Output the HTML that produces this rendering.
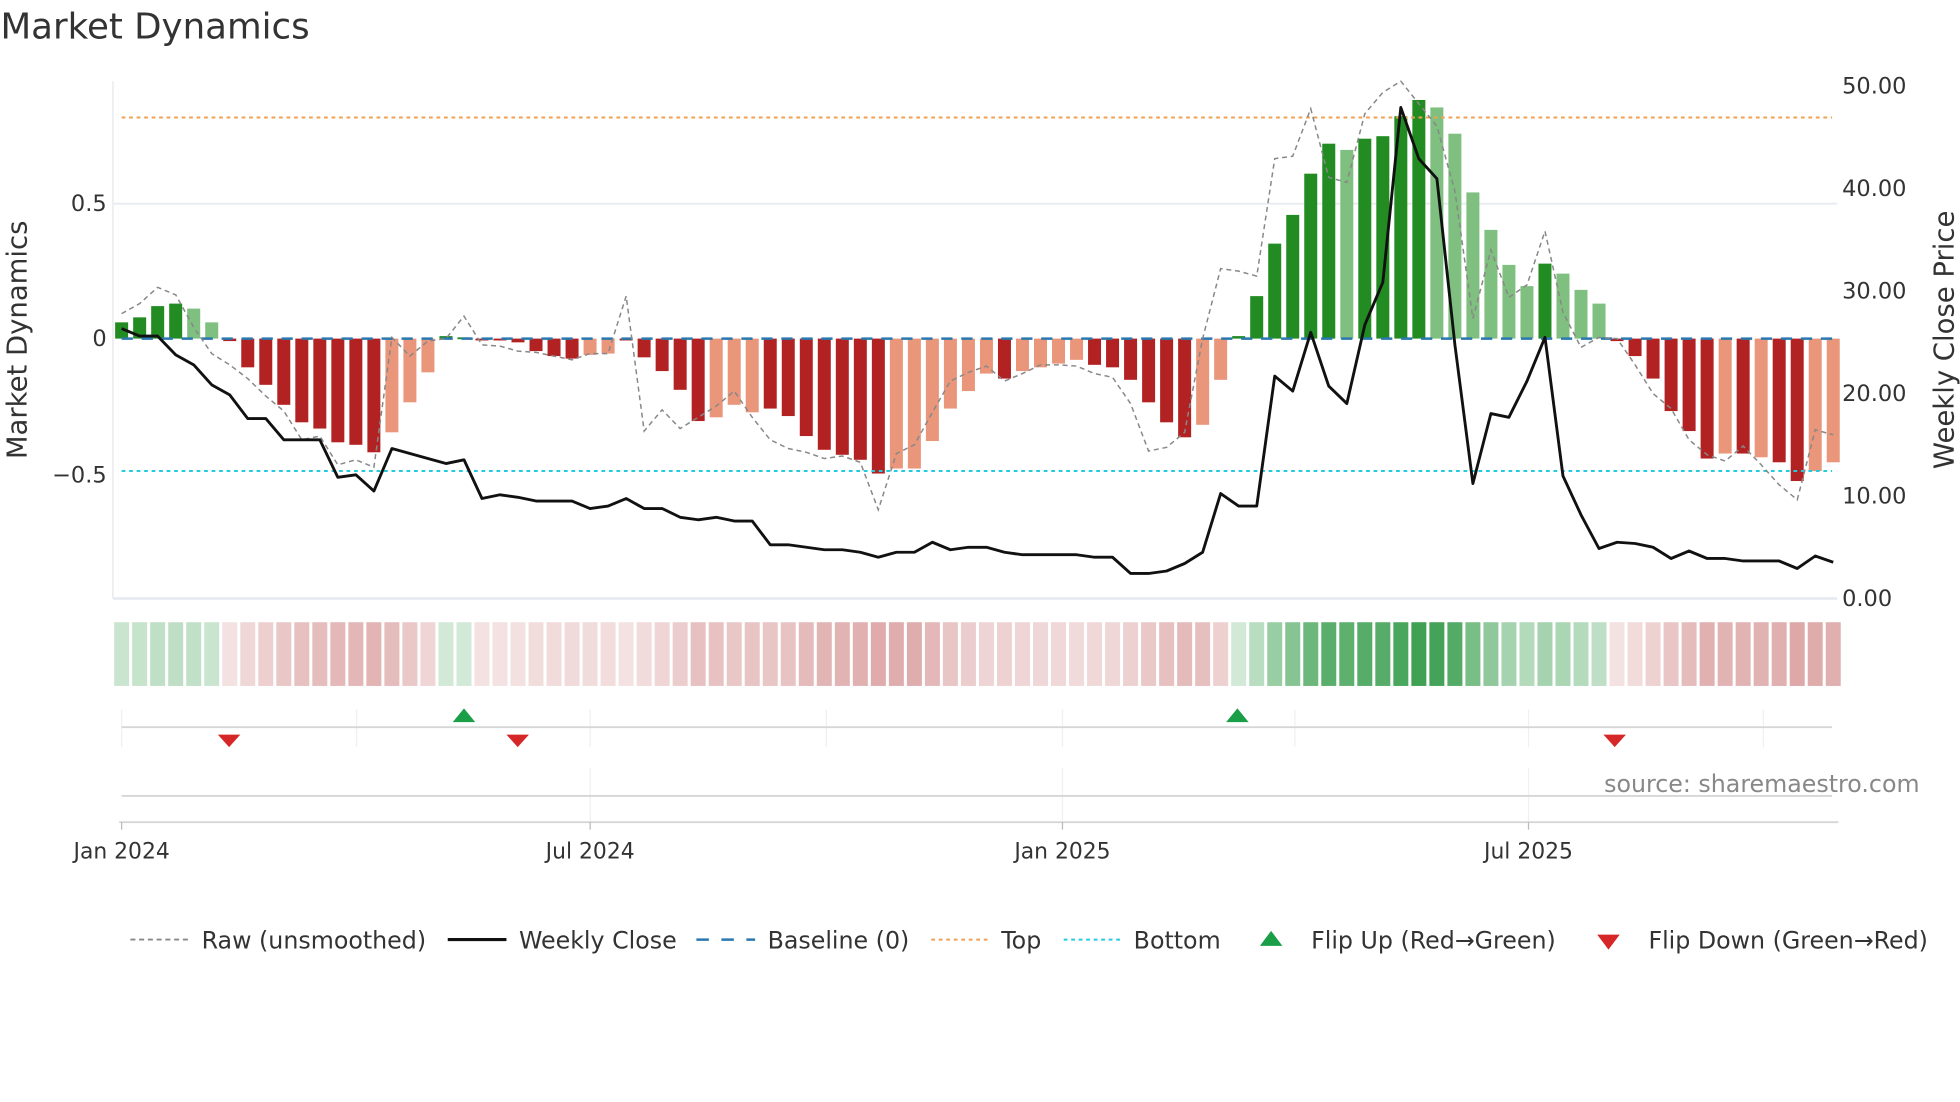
<!DOCTYPE html>
<html><head><meta charset="utf-8"><style>
html,body{margin:0;padding:0;background:#fff;width:1960px;height:1102px;overflow:hidden}
svg{display:block;font-family:"DejaVu Sans","Liberation Sans",sans-serif}
</style></head><body>
<svg id="s" width="1960" height="1102" viewBox="0 0 1568 882" xmlns="http://www.w3.org/2000/svg">
<rect width="1568" height="882" fill="#fff"/>
<text x="0" y="31" font-size="28.5" fill="#333">Market Dynamics</text>
<line x1="90" y1="163" x2="1470" y2="163" stroke="#e8ebf0" stroke-width="1.5"/>
<line x1="90" y1="65" x2="90" y2="479" stroke="#eceef2" stroke-width="1.5"/>
<line x1="90" y1="479" x2="1470" y2="479" stroke="#e6e9ef" stroke-width="2"/>
<g id="bars"></g>
<line x1="97" y1="94" x2="1466" y2="94" stroke="#f0a050" stroke-width="1.6" stroke-dasharray="3,3"/>
<line x1="97" y1="377" x2="1466" y2="377" stroke="#22ccdd" stroke-width="1.6" stroke-dasharray="3,3"/>
<line x1="97" y1="271" x2="1466" y2="271" stroke="#2a78b0" stroke-width="2" stroke-dasharray="9,7"/>
<polyline id="raw" fill="none" stroke="#888" stroke-width="1.2" stroke-dasharray="4,3"/>
<polyline id="px" fill="none" stroke="#111" stroke-width="2.3" stroke-linejoin="round"/>
<g id="heat"></g>
<g font-size="18" fill="#333">
<text x="85" y="169" text-anchor="end">0.5</text>
<text x="85" y="277" text-anchor="end">0</text>
<text x="85" y="386" text-anchor="end">−0.5</text>
<text x="1474" y="75">50.00</text>
<text x="1474" y="157">40.00</text>
<text x="1474" y="239">30.00</text>
<text x="1474" y="321">20.00</text>
<text x="1474" y="403">10.00</text>
<text x="1474" y="485">0.00</text>
<text transform="translate(21,272) rotate(-90)" text-anchor="middle" font-size="22">Market Dynamics</text>
<text transform="translate(1563,272) rotate(-90)" text-anchor="middle" font-size="22">Weekly Close Price</text>
</g>
<g stroke="#eef0f3" stroke-width="1">
<line x1="97" y1="568" x2="97" y2="598"/><line x1="285" y1="568" x2="285" y2="598"/><line x1="472" y1="568" x2="472" y2="598"/><line x1="661" y1="568" x2="661" y2="598"/><line x1="850" y1="568" x2="850" y2="598"/><line x1="1036" y1="568" x2="1036" y2="598"/><line x1="1223" y1="568" x2="1223" y2="598"/><line x1="1411" y1="568" x2="1411" y2="598"/>
<line x1="472" y1="615" x2="472" y2="658"/><line x1="850" y1="615" x2="850" y2="658"/><line x1="1223" y1="615" x2="1223" y2="658"/>
</g>
<line x1="97" y1="582" x2="1466" y2="582" stroke="#d6d6d6" stroke-width="1.5"/>
<line x1="97" y1="637" x2="1466" y2="637" stroke="#d6d6d6" stroke-width="1.5"/>
<line x1="95" y1="658" x2="1471" y2="658" stroke="#d6d6d6" stroke-width="1.5"/>
<g stroke="#bbb" stroke-width="1"><line x1="97" y1="658" x2="97" y2="664"/><line x1="472" y1="658" x2="472" y2="664"/><line x1="850" y1="658" x2="850" y2="664"/><line x1="1223" y1="658" x2="1223" y2="664"/></g>
<g fill="#1a9e48"><path d="M362,578 L380,578 L371,567Z"/><path d="M981,578 L999,578 L990,567Z"/></g>
<g fill="#d62728"><path d="M174,588 L192,588 L183,598Z"/><path d="M405,588 L423,588 L414,598Z"/><path d="M1283,588 L1301,588 L1292,598Z"/></g>
<text x="1536" y="634" text-anchor="end" font-size="19" fill="#888">source: sharemaestro.com</text>
<g font-size="17.5" fill="#333" text-anchor="middle">
<text x="97" y="687">Jan 2024</text><text x="472" y="687">Jul 2024</text><text x="850" y="687">Jan 2025</text><text x="1223" y="687">Jul 2025</text>
</g>
<g font-size="19" fill="#333">
<line x1="104" y1="752" x2="150" y2="752" stroke="#888" stroke-width="1.5" stroke-dasharray="4,3"/>
<text x="161" y="759">Raw (unsmoothed)</text>
<line x1="358" y1="752" x2="405" y2="752" stroke="#111" stroke-width="2.5"/>
<text x="415" y="759">Weekly Close</text>
<line x1="557" y1="752" x2="604" y2="752" stroke="#2a78b0" stroke-width="2" stroke-dasharray="10,10"/>
<text x="614" y="759">Baseline (0)</text>
<line x1="745" y1="752" x2="791" y2="752" stroke="#f0a050" stroke-width="1.6" stroke-dasharray="3,3"/>
<text x="801" y="759">Top</text>
<line x1="851" y1="752" x2="897" y2="752" stroke="#22ccdd" stroke-width="1.6" stroke-dasharray="3,3"/>
<text x="907" y="759">Bottom</text>
<path d="M1008,757 L1026,757 L1017,745Z" fill="#1a9e48"/>
<text x="1049" y="759">Flip Up (Red→Green)</text>
<path d="M1278,748 L1296,748 L1287,760Z" fill="#d62728"/>
<text x="1319" y="759">Flip Down (Green→Red)</text>
</g>
</svg>
<script>
var tops=[258,254,245,243,247,258,273,294,308,324,338,343,354,356,362,346,322,298,269,270,272,272,274,281,285,287,284,283,272,286,297,312,337,334,324,330,327,333,349,360,364,368,379,375,375,353,327,313,299,303,297,294,291,288,292,294,304,322,338,350,340,304,269,237,195,172,139,115,120,111,109,93,80,86,107,154,184,212,229,211,219,232,243,273,285,303,329,345,367,363,363,366,370,385,377,370];
var kind="DDDD"+"LL"+"RRRRRRRRR"+"SSS"+"DDRR"+"RRRR"+"SS"+"R"+"RRRR"+"SSS"+"RRRRRRR"+"SSSSSS"+"R"+"SSSS"+"RRRRRR"+"SS"+"DDDDDD"+"L"+"DDDD"+"LLLLLL"+"D"+"LLL"+"RRRRRR"+"S"+"R"+"S"+"RR"+"SS";
var col={D:"#228b22",L:"#7fbf7f",R:"#b22222",S:"#e9967a"};
var ns="http://www.w3.org/2000/svg",b=document.getElementById("bars"),h=document.getElementById("heat");
function X(i){return 97+14.42*i}
for(var i=0;i<96;i++){
 var t=tops[i],y=Math.min(t,271),hh=Math.max(1.5,Math.abs(t-271));
 var r=document.createElementNS(ns,"rect");r.setAttribute("x",X(i)-5.2);r.setAttribute("y",y);r.setAttribute("width",10.4);r.setAttribute("height",hh);r.setAttribute("fill",col[kind[i]]);b.appendChild(r);
 var pos=t<=271,m=Math.min(1,Math.abs(t-271)/190),a=0.22+0.75*m,c0=pos?[58,158,79]:[205,125,125];
 var cc=c0.map(function(v){return Math.round(255-(255-v)*a)});
 var q=document.createElementNS(ns,"rect");q.setAttribute("x",X(i)-6);q.setAttribute("y",498);q.setAttribute("width",12);q.setAttribute("height",51);q.setAttribute("fill","rgb("+cc+")");h.appendChild(q);
}
var px=[263,269,269,284,292,308,316,335,335,352,352,352,382,380,393,359,363,367,371,368,399,396,398,401,401,401,407,405,399,407,407,414,416,414,417,417,436,436,438,440,440,442,446,442,442,434,440,438,438,442,444,444,444,444,446,446,459,459,457,451,442,395,405,405,301,313,266,309,323,260,226,86,127,143,276,387,331,334,305,270,381,412,439,434,435,438,447,441,447,447,449,449,449,455,445,450];
var raw=[251,243,230,236,262,283,292,303,317,329,352,349,372,368,374,270,285,273,271,253,276,277,281,282,285,288,283,283,237,345,328,343,334,325,313,334,352,359,362,367,365,370,408,363,356,330,305,298,293,305,299,292,292,293,299,302,323,361,358,346,271,215,217,221,127,125,87,142,146,91,74,65,83,101,153,255,200,238,228,185,250,278,270,271,292,315,327,352,364,369,357,372,388,400,344,348];
function pts(a){return a.map(function(v,i){return X(i).toFixed(1)+","+v}).join(" ")}
document.getElementById("px").setAttribute("points",pts(px));
document.getElementById("raw").setAttribute("points",pts(raw));
</script>
</body></html>
